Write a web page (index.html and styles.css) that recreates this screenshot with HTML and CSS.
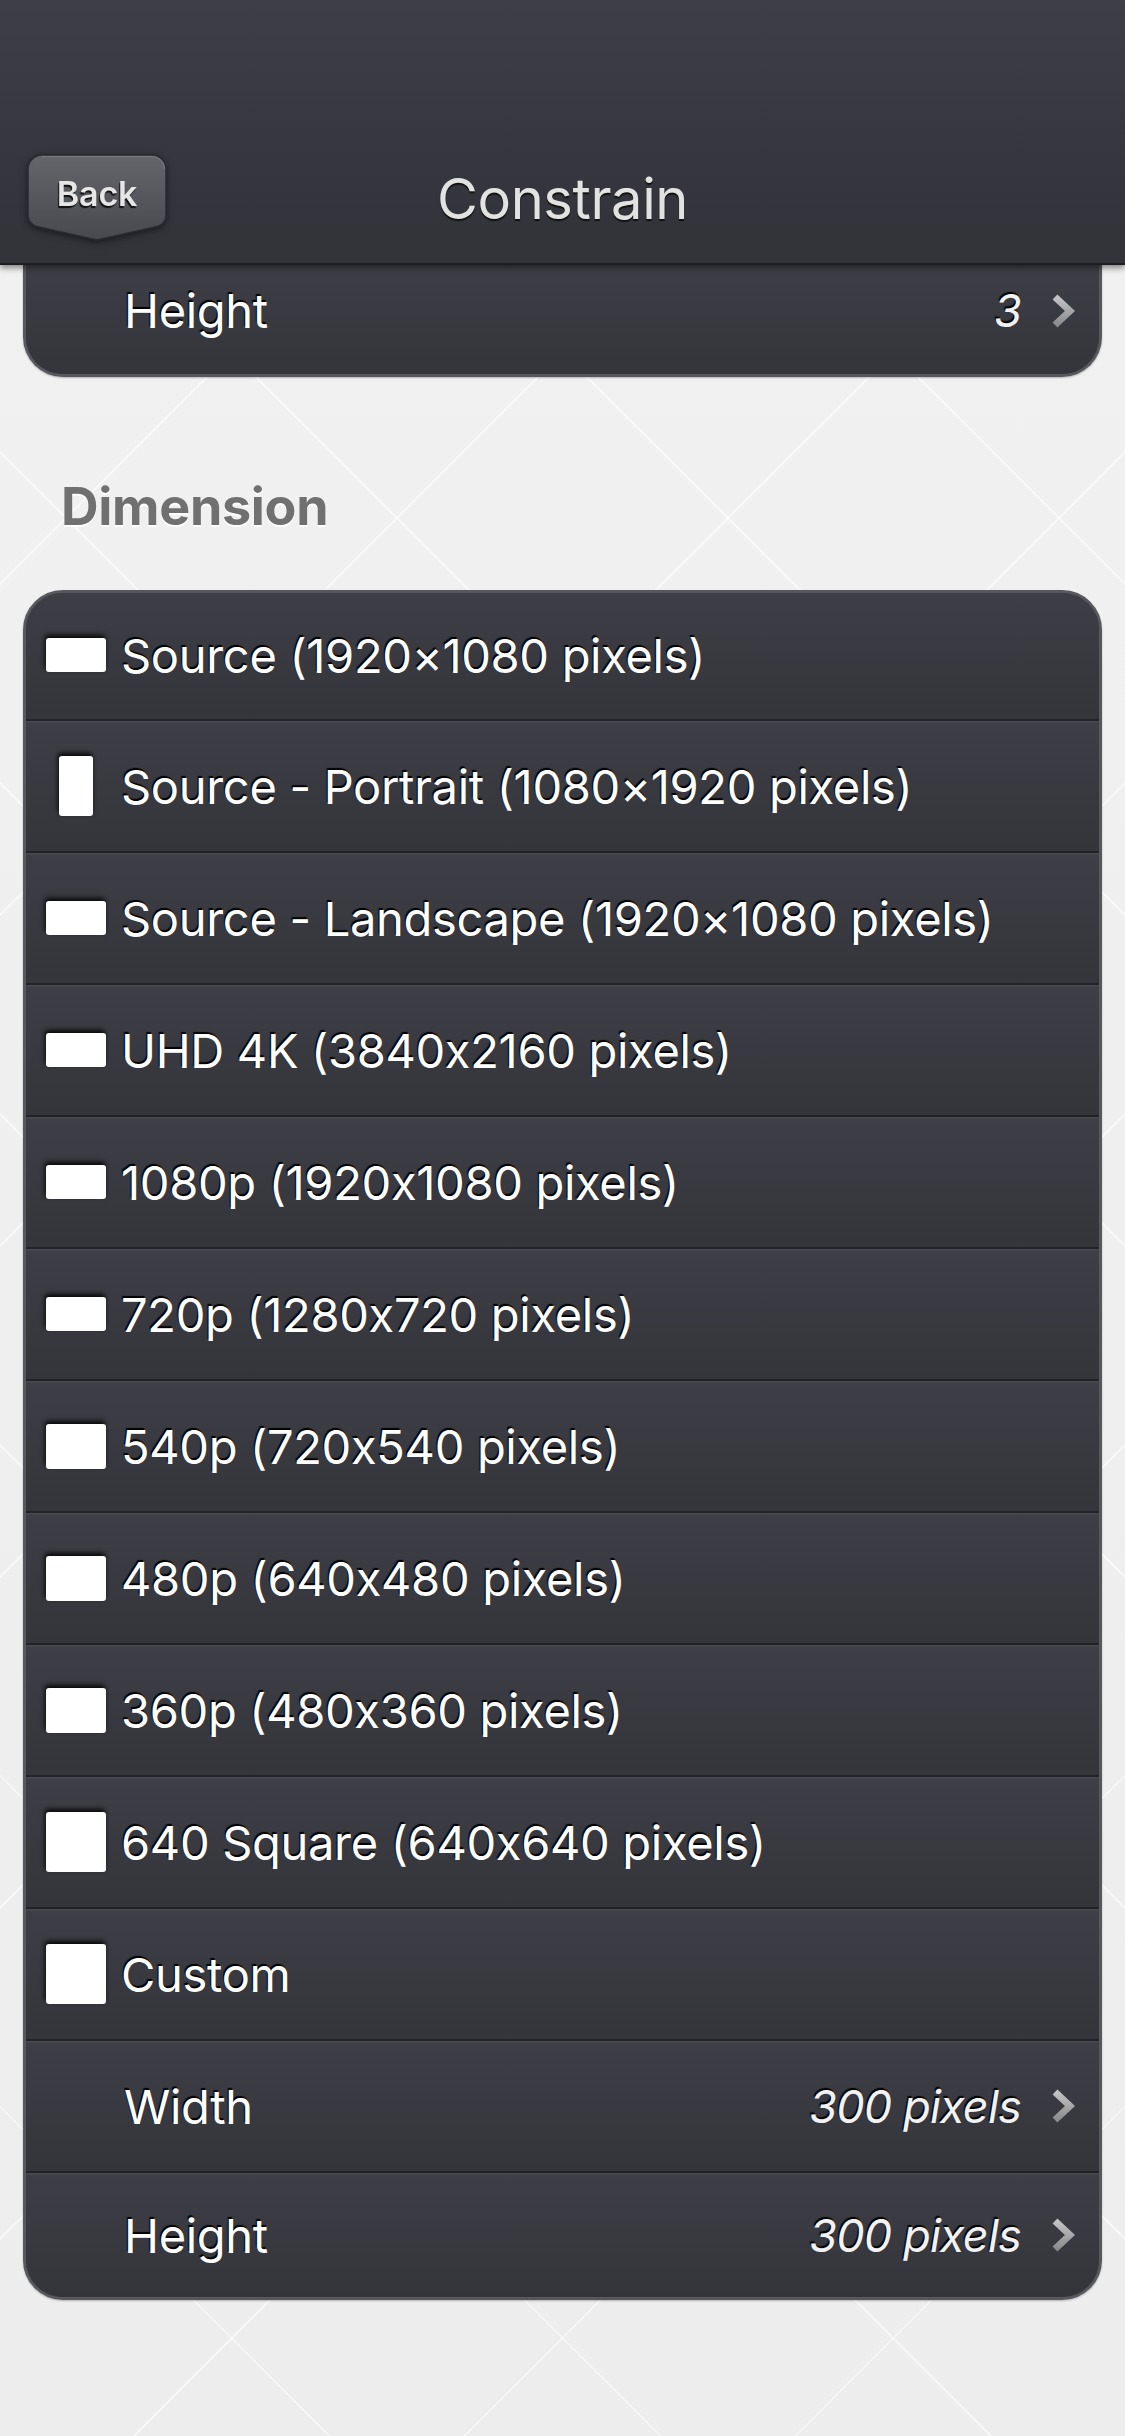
FILE: index.html
```html
<!DOCTYPE html>
<html>
<head>
<meta charset="utf-8">
<link rel="stylesheet" href="styles.css">
</head>
<body>
<header class="navbar">
  <button class="back">
    <svg class="back-bg" width="140" height="88" viewBox="0 0 140 88">
      <defs>
        <linearGradient id="bg" x1="0" y1="0" x2="0" y2="1">
          <stop offset="0" stop-color="#65666c"/>
          <stop offset="1" stop-color="#48494f"/>
        </linearGradient>
      </defs>
      <path d="M15 1 H125 A14 14 0 0 1 139 15 V62 A12 12 0 0 1 128 73 L70 86 L12 73 A12 12 0 0 1 1 62 V15 A14 14 0 0 1 15 1 Z" fill="url(#bg)" stroke="#2a2b30" stroke-width="1.5"/>
      <path d="M15 2.5 H125 A12.5 12.5 0 0 1 137.5 15" fill="none" stroke="#7a7b80" stroke-width="1"/>
    </svg>
    <span class="back-label">Back</span>
  </button>
  <h1 class="title">Constrain</h1>
</header>

<main class="content">
  <section class="card card-tail">
    <div class="row row-setting">
      <span class="label">Height</span>
      <span class="value">3</span>
      <svg class="chev" width="24" height="36" viewBox="0 0 24 36"><defs><linearGradient id="cg1" x1="0" y1="0" x2="0" y2="1"><stop offset="0" stop-color="#c4c4c6"/><stop offset="1" stop-color="#8a8a8d"/></linearGradient></defs><path d="M4 4 L19 18 L4 32" fill="none" stroke="url(#cg1)" stroke-width="7"/></svg>
    </div>
  </section>

  <h2 class="section-title">Dimension</h2>

  <section class="card">
    <div class="row"><span class="icon"><i class="shape wide"></i></span><span class="label">Source (1920×1080 pixels)</span></div>
    <div class="row"><span class="icon"><i class="shape tall"></i></span><span class="label">Source - Portrait (1080×1920 pixels)</span></div>
    <div class="row"><span class="icon"><i class="shape wide"></i></span><span class="label">Source - Landscape (1920×1080 pixels)</span></div>
    <div class="row"><span class="icon"><i class="shape wide"></i></span><span class="label">UHD 4K (3840x2160 pixels)</span></div>
    <div class="row"><span class="icon"><i class="shape wide"></i></span><span class="label">1080p (1920x1080 pixels)</span></div>
    <div class="row"><span class="icon"><i class="shape wide"></i></span><span class="label">720p (1280x720 pixels)</span></div>
    <div class="row"><span class="icon"><i class="shape std"></i></span><span class="label">540p (720x540 pixels)</span></div>
    <div class="row"><span class="icon"><i class="shape std"></i></span><span class="label">480p (640x480 pixels)</span></div>
    <div class="row"><span class="icon"><i class="shape std"></i></span><span class="label">360p (480x360 pixels)</span></div>
    <div class="row"><span class="icon"><i class="shape square"></i></span><span class="label">640 Square (640x640 pixels)</span></div>
    <div class="row"><span class="icon"><i class="shape square"></i></span><span class="label">Custom</span></div>
    <div class="row row-setting">
      <span class="label">Width</span>
      <span class="value">300 pixels</span>
      <svg class="chev" width="24" height="36" viewBox="0 0 24 36"><defs><linearGradient id="cg2" x1="0" y1="0" x2="0" y2="1"><stop offset="0" stop-color="#c4c4c6"/><stop offset="1" stop-color="#8a8a8d"/></linearGradient></defs><path d="M4 4 L19 18 L4 32" fill="none" stroke="url(#cg2)" stroke-width="7"/></svg>
    </div>
    <div class="row row-setting">
      <span class="label">Height</span>
      <span class="value">300 pixels</span>
      <svg class="chev" width="24" height="36" viewBox="0 0 24 36"><defs><linearGradient id="cg3" x1="0" y1="0" x2="0" y2="1"><stop offset="0" stop-color="#c4c4c6"/><stop offset="1" stop-color="#8a8a8d"/></linearGradient></defs><path d="M4 4 L19 18 L4 32" fill="none" stroke="url(#cg3)" stroke-width="7"/></svg>
    </div>
  </section>
</main>
</body>
</html>
```
FILE: styles.css
```css
* { box-sizing: border-box; }

html, body {
  margin: 0;
  padding: 0;
}

body {
  width: 1125px;
  min-height: 2436px;
  font-family: Inter, "Noto Sans", "Liberation Sans", sans-serif;
  background-color: #efefef;
  background-image:
    repeating-linear-gradient(45deg, rgba(255,255,255,0) 0 232px, rgba(255,255,255,0.55) 232px 234px),
    repeating-linear-gradient(-45deg, rgba(255,255,255,0) 0 232px, rgba(255,255,255,0.55) 232px 234px),
    linear-gradient(#f1f1f1, #ededed);
}

.navbar {
  position: relative;
  z-index: 2;
  height: 265px;
  display: flex;
  align-items: flex-start;
  padding: 154px 0 0 27px;
  background: linear-gradient(#3d3e46 0%, #35363d 70%, #323339 100%);
  border-bottom: 2px solid #1c1d21;
  box-shadow: 0 3px 6px rgba(0,0,0,0.45);
}

.back {
  position: relative;
  width: 140px;
  height: 88px;
  padding: 0 0 10px;
  margin: 0;
  border: 0;
  background: transparent;
  display: flex;
  align-items: center;
  justify-content: center;
  font-family: Inter, "Noto Sans", sans-serif;
  filter: drop-shadow(0 2px 3px rgba(0,0,0,0.5));
}

.back-bg {
  position: absolute;
  left: 0;
  top: 0;
}

.back-label {
  position: relative;
  color: #e6e6e6;
  font-size: 34px;
  font-weight: 600;
  letter-spacing: -0.2px;
  text-shadow: -1px 2px 1px #111;
}

.title {
  margin: 0;
  position: absolute;
  left: 0;
  right: 0;
  top: 166px;
  text-align: center;
  color: #e2e2e2;
  font-size: 56px;
  font-weight: 400;
  letter-spacing: -0.4px;
  line-height: 66px;
  text-shadow: 0 2px 1px #111;
  pointer-events: none;
}

.content {
  padding: 0 23px 40px;
}

.card {
  background: #36373d;
  border: 3px solid #57585d;
  border-radius: 40px;
  overflow: hidden;
  box-shadow: 0 1px 2px rgba(0,0,0,0.25);
}

.card-tail {
  border-top: 0;
  border-radius: 0 0 40px 40px;
  height: 112px;
}

.card-tail .row {
  height: 109px;
  padding-bottom: 18px;
}

.row {
  height: 132px;
  display: flex;
  align-items: center;
  padding: 0 24px 0 19px;
  background: linear-gradient(#3e3f46, #34353b);
  color: #fff;
}

.card > .row:first-child:not(:last-child) { height: 126px; padding-bottom: 2px; }
.card > .row:last-child:not(:first-child) { height: 126px; }

.row + .row {
  border-top: 2px solid #222327;
  background: linear-gradient(#494a51 0 1px, #3e3f46 2px, #34353b 100%);
}

.icon {
  width: 62px;
  height: 62px;
  flex: 0 0 62px;
  display: flex;
  align-items: center;
  justify-content: center;
  margin-right: 14px;
}

.shape {
  display: block;
  background: #fff;
  border-radius: 3px;
  box-shadow: -1px -3px 5px rgba(0,0,0,0.9);
}

.shape.wide { width: 60px; height: 34px; }
.shape.tall { width: 34px; height: 60px; }
.shape.std { width: 60px; height: 45px; }
.shape.square { width: 60px; height: 60px; }

.label {
  font-size: 47px;
  font-weight: 400;
  color: #fff;
  letter-spacing: -0.3px;
  text-shadow: -1px -2px 1px #000;
  white-space: nowrap;
}

.row-setting .label {
  padding-left: 79px;
  flex: 1;
}

.value {
  font-size: 45px;
  font-style: italic;
  color: #f2f2f2;
  text-shadow: -1px -2px 1px #000;
  margin-right: 30px;
  letter-spacing: -0.8px;
}

.chev {
  display: block;
  flex: 0 0 24px;
}

.section-title {
  margin: 0;
  padding: 100px 0 0 38px;
  height: 213px;
  font-size: 52px;
  font-weight: 700;
  color: #707070;
  letter-spacing: -0.3px;
  line-height: 60px;
  text-shadow: 0 2px 0 #fff;
}
```
